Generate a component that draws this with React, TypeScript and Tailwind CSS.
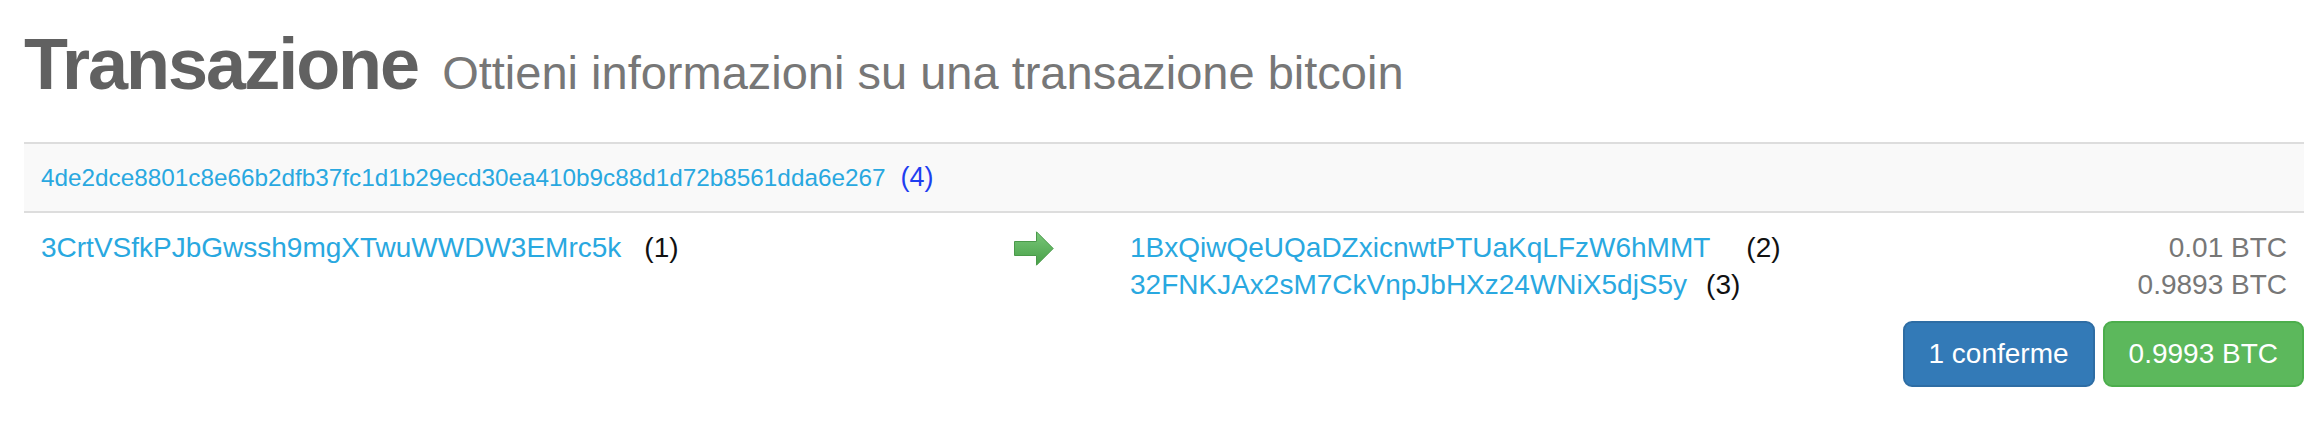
export default function App() {
  const hash = "4de2dce8801c8e66b2dfb37fc1d1b29ecd30ea410b9c88d1d72b8561dda6e267";
  const outputs = [
    { address: "1BxQiwQeUQaDZxicnwtPTUaKqLFzW6hMMT", note: "(2)", noteGap: "ml-[36px]", amount: "0.01 BTC" },
    { address: "32FNKJAx2sM7CkVnpJbHXz24WNiX5djS5y", note: "(3)", noteGap: "ml-[19px]", amount: "0.9893 BTC" },
  ];

  return (
    <div className="min-h-screen bg-white pl-[24px] pr-[18px] pt-[25px] font-['Liberation_Sans',Arial,sans-serif]">
      <h1 className="flex items-baseline gap-[24px] leading-[79px]">
        <span className="text-[72px] font-bold tracking-[-2px] text-[#616161]">Transazione</span>
        <span className="text-[47px] font-normal text-[#777777]">Ottieni informazioni su una transazione bitcoin</span>
      </h1>

      <div className="mt-[30px] border-t-2 border-[#dddddd]">
        <div className="border-b-2 border-[#dddddd] bg-[#f9f9f9] px-[17px] py-[16px] text-[24.3px] leading-[34px]">
          <a className="text-[#29a8e0]">{hash}</a>
          <span className="ml-[15px] text-[27px] text-[#1f3ff0]">(4)</span>
        </div>

        <div className="flex pb-[18px] pt-[16px] text-[28px] leading-[37px]">
          <div className="w-[973px] px-[17px]">
            <a className="text-[#29a8e0]">3CrtVSfkPJbGwssh9mgXTwuWWDW3EMrc5k</a>
            <span className="ml-[23px] text-[#111111]">(1)</span>
          </div>

          <div className="flex w-[116px] items-start px-[17px] pt-[2px]">
            <svg width="40" height="35" viewBox="0 0 40 35" aria-hidden="true">
              <defs>
                <linearGradient id="arrowGreen" x1="0" y1="0" x2="0" y2="1">
                  <stop offset="0" stopColor="#79c779" />
                  <stop offset="1" stopColor="#48a048" />
                </linearGradient>
              </defs>
              <path
                d="M0.5 10.5 H22.5 V0.8 L39.2 17.5 L22.5 34.2 V24.5 H0.5 Z"
                fill="url(#arrowGreen)"
                stroke="#4a9a4a"
                strokeWidth="1"
              />
            </svg>
          </div>

          <div className="flex-1 px-[17px]">
            {outputs.map((out) => (
              <div key={out.address} className="flex justify-between">
                <div>
                  <a className="text-[#29a8e0]">{out.address}</a>
                  <span className={`${out.noteGap} text-[#111111]`}>{out.note}</span>
                </div>
                <span className="text-[#777777]">{out.amount}</span>
              </div>
            ))}
          </div>
        </div>
      </div>

      <div className="flex justify-end gap-[8px]">
        <button
          type="button"
          className="rounded-[9px] border-2 border-[#2e6da4] bg-[#337ab7] px-[24px] py-[11px] text-[28px] leading-[40px] text-white"
        >
          1 conferme
        </button>
        <button
          type="button"
          className="rounded-[9px] border-2 border-[#4cae4c] bg-[#5cb85c] px-[24px] py-[11px] text-[28px] leading-[40px] text-white"
        >
          0.9993 BTC
        </button>
      </div>
    </div>
  );
}
